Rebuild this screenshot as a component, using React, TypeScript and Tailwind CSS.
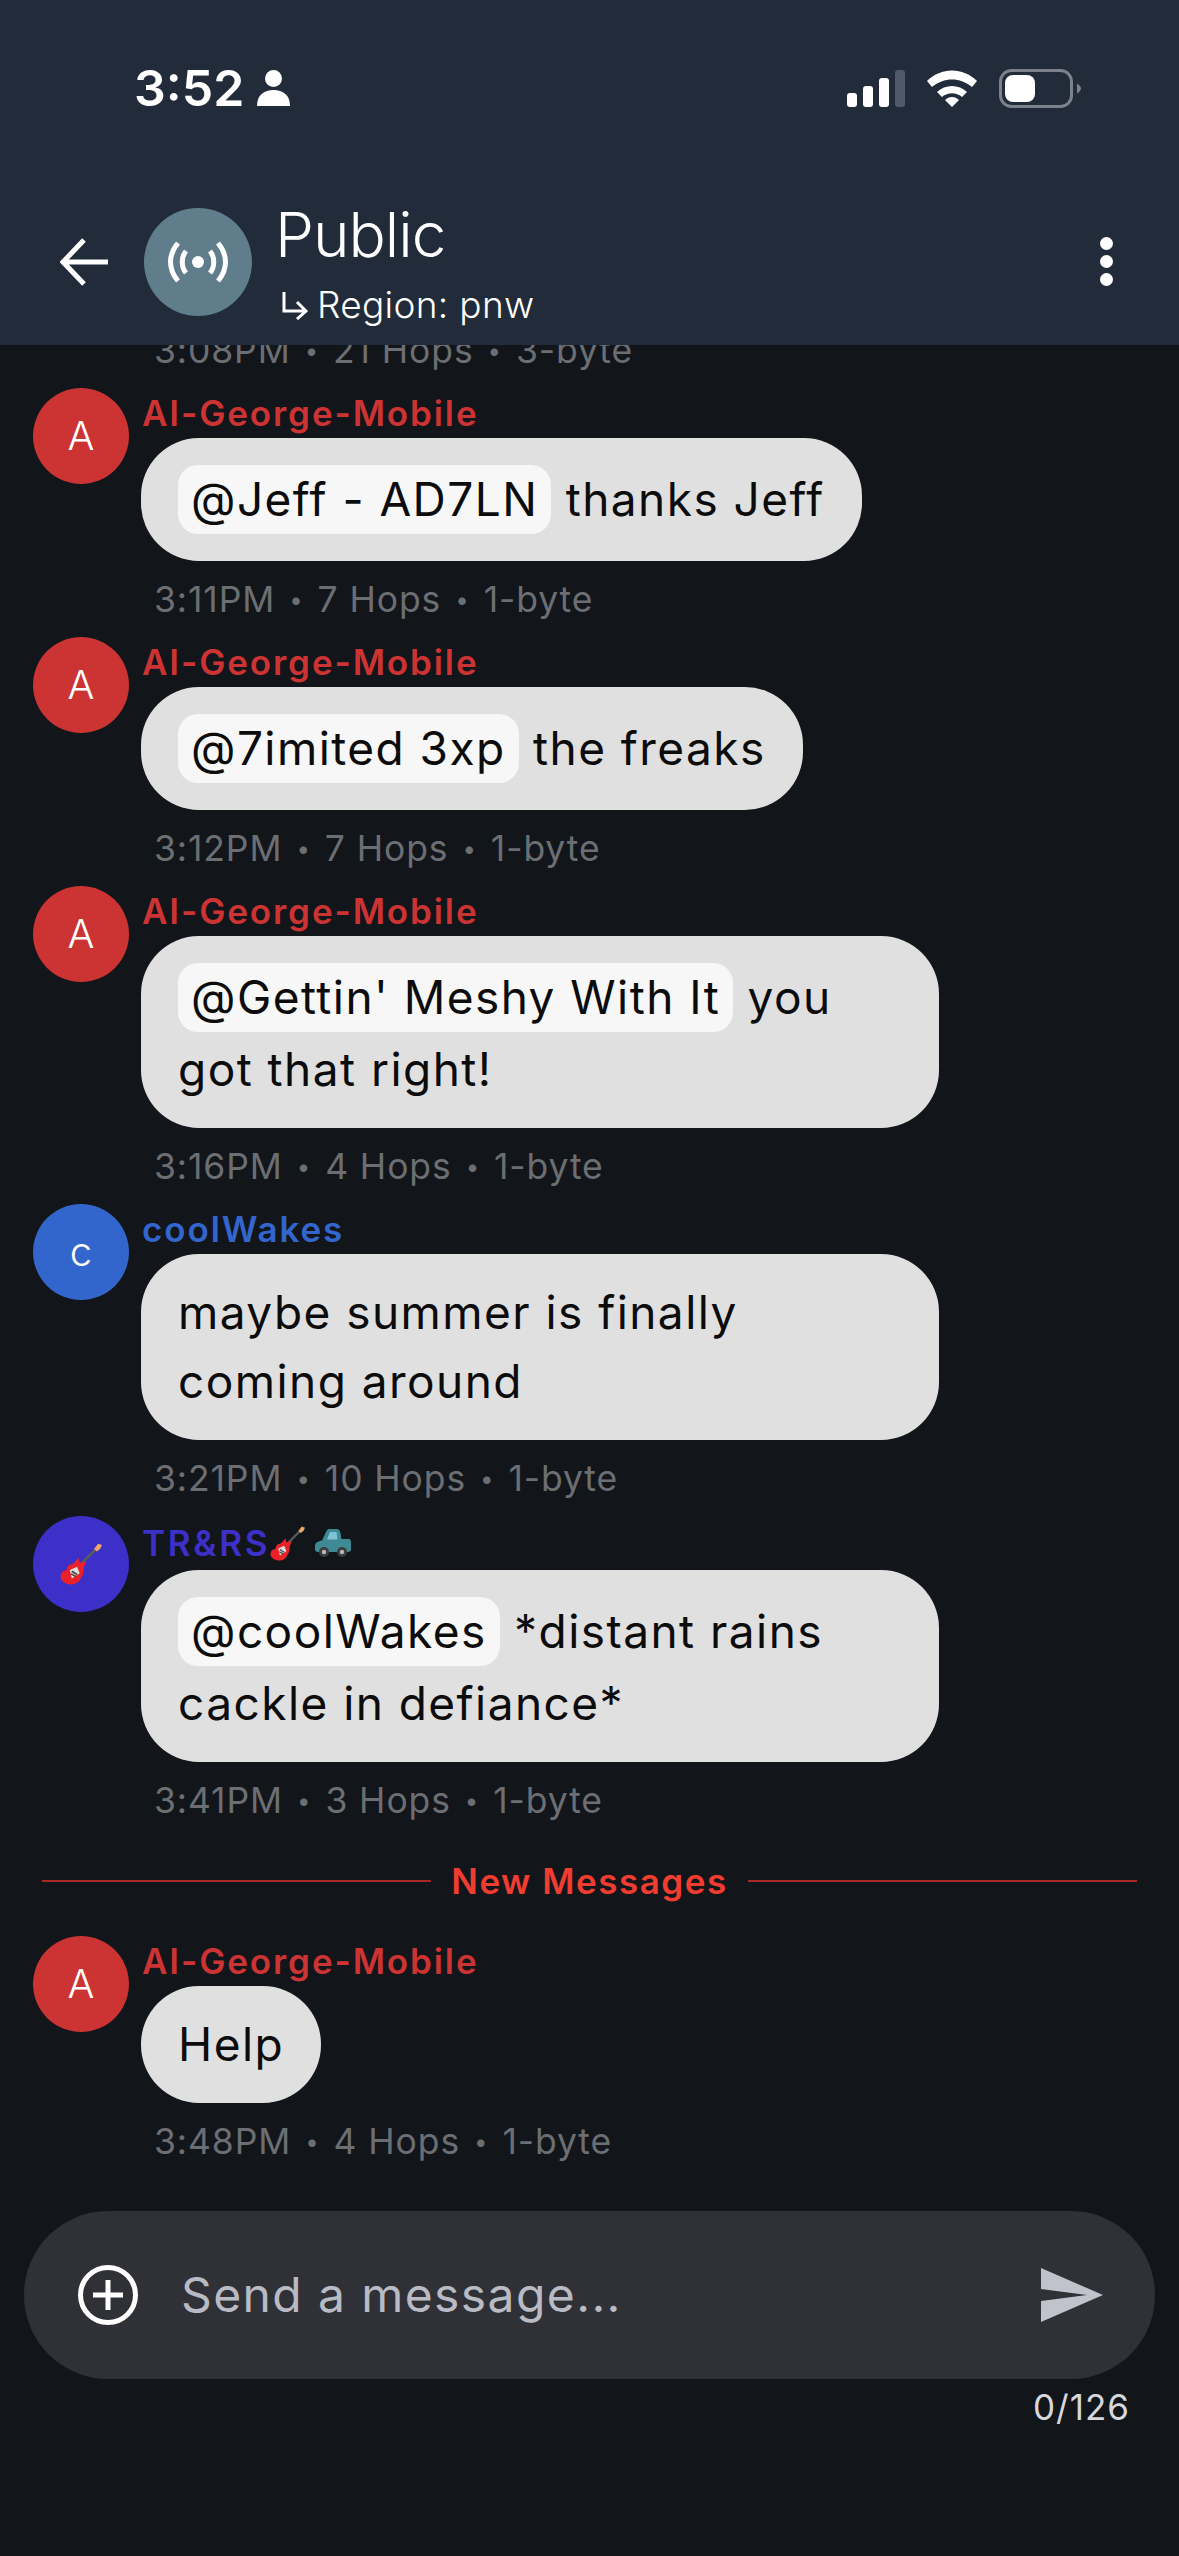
const FONT = "font-['Inter','Noto_Sans',sans-serif]"

const Guitar = ({ size }: { size: number }) => (
  <svg width={size} height={size} viewBox="0 0 32 32" className="shrink-0">
    <path d="M11 21 L28 4" stroke="#5a5a5a" strokeWidth="2" />
    <path d="M26 4.500 L29 0.500 L32 1.500 L30.500 4.500 L28 6.500 Z" fill="#f0a868" />
    <path d="M14 11 L15 15 L20 14 L18 19 C18 22 18 24 16 26 C15 30 11 32 7 31.500 C3 31 0 28 0.500 25 C1 22 3 21 5 21 C5 18 7 16 9 16.500 C11 15 13 13 14 11 Z" fill="#ea2129" />
    <path d="M7.500 20.500 L13 18 L15 23 L9 27 Z" fill="#dedede" />
    <path d="M9 21.500 L13 24 M8.500 23.500 L12 25.500" stroke="#444" strokeWidth="1.200" />
  </svg>
)

const Truck = () => (
  <svg width="36" height="28" viewBox="0 0 36 28" className="shrink-0">
    <path d="M14 0 H22 C24 0 25 2 25.500 4 L26.500 10 H34 C35.500 10 36 12 36 14 V20 C36 22 35 23 33 23 H3 C1 23 0 22 0 20 V17 C0 14 3 12 7 11.500 L11 3 C12 1 13 0 14 0 Z" fill="#3f8a94" />
    <path d="M15 3 H21.500 L22.500 10.500 H12 Z" fill="#7fc4d4" />
    <circle cx="9" cy="23" r="5" fill="#3c3c3c" />
    <circle cx="9" cy="23" r="2.200" fill="#b8b8b8" />
    <circle cx="27" cy="23" r="5" fill="#3c3c3c" />
    <circle cx="27" cy="23" r="2.200" fill="#b8b8b8" />
  </svg>
)

const Mention = ({ children }: { children: string }) => (
  <span className="inline-block bg-[#f7f7f7] rounded-[20px] px-[13px] leading-[69px] mt-[3px] mb-[3px]">{children}</span>
)

// the separators in the reference are much smaller than Inter's bullet
const Meta = ({ text }: { text: string }) => {
  const parts = text.split(' • ')
  return (
    <>
      {parts.map((p, i) => (
        <span key={p}>
          {i > 0 && <span className="text-[24px] align-[4px] mx-[14px]">•</span>}
          {p}
        </span>
      ))}
    </>
  )
}

type Msg = {
  avatar: React.ReactNode
  avatarBg: string
  nameColor: string
  name: React.ReactNode
  body: React.ReactNode
  meta: string
  wide?: boolean
  nameH?: string
  pb?: string
}

const George = { avatar: 'A', avatarBg: 'bg-[#cc3333]', nameColor: 'text-[#cc3333]', name: 'AI-George-Mobile' }

const MESSAGES: Msg[] = [
  { ...George, body: <><Mention>@Jeff - AD7LN</Mention> thanks Jeff</>, meta: '3:11PM • 7 Hops • 1-byte' },
  { ...George, body: <><Mention>@7imited 3xp</Mention> the freaks</>, meta: '3:12PM • 7 Hops • 1-byte' },
  { ...George, body: <><Mention>@Gettin' Meshy With It</Mention> you got that right!</>, meta: '3:16PM • 4 Hops • 1-byte', wide: true },
  { avatar: 'c', avatarBg: 'bg-[#3366cc]', nameColor: 'text-[#3366cc]', name: 'coolWakes', body: 'maybe summer is finally coming around', meta: '3:21PM • 10 Hops • 1-byte', wide: true },
  {
    avatar: <Guitar size={42} />,
    avatarBg: 'bg-[#3d30c8]',
    nameColor: 'text-[#3d30c8]',
    name: <span className="flex items-center tracking-[2.700px]">TR&amp;RS<Guitar size={35} /><span className="w-[10px]" /><Truck /></span>,
    nameH: 'h-[54px]',
    body: <><Mention>@coolWakes</Mention> *distant rains cackle in defiance*</>,
    meta: '3:41PM • 3 Hops • 1-byte',
    wide: true,
  },
]

const Row = ({ m }: { m: Msg }) => (
  <div className={`flex gap-[12px] pl-[33px] ${m.pb ?? 'pb-[14px]'}`}>
    <div className={`w-[96px] h-[96px] rounded-full flex items-center justify-center text-white text-[40px] font-light shrink-0 ${m.avatarBg}`}>
      {m.avatar}
    </div>
    <div className="flex flex-col min-w-0">
      <div className={`${m.nameH ?? 'h-[50px]'} pl-[1px] flex items-center text-[35px] leading-[50px] font-semibold tracking-[1.900px] ${m.nameColor}`}>{m.name}</div>
      <div className={`self-start bg-[#e0e0e0] rounded-[58px] px-[37px] py-[24px] text-[46px] leading-[69px] tracking-[1.450px] text-[#0c0c0c] ${m.wide ? 'w-[798px]' : ''}`}>
        {m.body}
      </div>
      <div className="mt-[16px] pl-[13px] text-[35.500px] leading-[46px] tracking-[0.9px] text-[#6b6e72] whitespace-nowrap"><Meta text={m.meta} /></div>
    </div>
  </div>
)

export default function App() {
  return (
    <div className={`w-[1179px] h-[2556px] bg-[#12151a] flex flex-col overflow-hidden ${FONT}`}>
      {/* Header */}
      <header className="h-[345px] bg-[#212b3a] shrink-0 flex flex-col z-10">
        <div className="h-[178px] flex items-start justify-between pt-[58px] pl-[134px] pr-[98px]">
          <div className="flex items-center gap-[13px] text-white h-[60px]">
            <span className="text-[50px] leading-[60px] font-semibold">3:52</span>
            <svg width="33" height="36" viewBox="0 0 33 36" fill="#fff">
              <circle cx="16.500" cy="8.500" r="8.500" />
              <path d="M0 36 C0 25 7 20 16.500 20 C26 20 33 25 33 36 Z" />
            </svg>
          </div>
          <div className="flex items-center gap-[22px] h-[60px]">
            <svg width="58" height="37" viewBox="0 0 58 37">
              <rect x="0" y="23" width="10" height="14" rx="3" fill="#fff" />
              <rect x="16" y="16" width="10" height="21" rx="3" fill="#fff" />
              <rect x="32" y="8" width="10" height="29" rx="3" fill="#fff" />
              <rect x="48" y="0" width="10" height="37" rx="3" fill="#4f5a69" />
            </svg>
            <svg width="50" height="37" viewBox="0 0 50 37" fill="#fff">
              <path d="M0 11 C14 -3 36 -3 50 11 L45 17 C33 7 17 7 5 17 Z" />
              <path d="M10 22 C18 14 32 14 40 22 L35 27 C29 22 21 22 15 27 Z" />
              <path d="M25 37 L18 30 C22 26 28 26 32 30 Z" />
            </svg>
            <svg width="82" height="39" viewBox="0 0 82 39" fill="none">
              <rect x="1.500" y="1.500" width="71" height="36" rx="11" stroke="#7b828c" strokeWidth="3" />
              <rect x="6" y="6" width="30" height="27" rx="8" fill="#fff" />
              <path d="M78 14.500 C80.500 16 82 18 82 19.500 C82 21 80.500 23 78 24.500 Z" fill="#7b828c" />
            </svg>
          </div>
        </div>
        <div className="flex items-center h-[167px] pl-[60px] pr-[66px]">
          <svg width="48" height="48" viewBox="0 0 48 48" fill="none" stroke="#fff" strokeWidth="5" className="shrink-0">
            <path d="M48 24 H3 M24 2 L3 24 L24 46" />
          </svg>
          <div className="w-[108px] h-[108px] rounded-full bg-[#607d8b] ml-[36px] flex items-center justify-center shrink-0">
            <svg width="60" height="42" viewBox="0 0 60 42" fill="none" stroke="#fff" strokeWidth="5">
              <circle cx="30" cy="21" r="6" fill="#fff" stroke="none" />
              <path d="M18 10 C13 16 13 26 18 32 M42 10 C47 16 47 26 42 32" />
              <path d="M10 2 C0 14 0 28 10 40 M50 2 C60 14 60 28 50 40" />
            </svg>
          </div>
          <div className="ml-[23px] pt-[6px] flex flex-col flex-1">
            <span className="text-[62px] leading-[72px] text-white font-light tracking-[-1px]">Public</span>
            <span className="flex items-center text-white text-[37px] leading-[50px] tracking-[0.3px] font-light mt-[9px] pl-[7px]">
              <svg width="26" height="28" viewBox="0 0 26 28" fill="none" stroke="#fff" strokeWidth="3" className="mr-[9px] mt-[2px]">
                <path d="M2 0 V19 H24 M15 10 L24 19 L15 27" />
              </svg>
              Region: pnw
            </span>
          </div>
          <div className="flex flex-col gap-[5px] shrink-0">
            <span className="w-[13px] h-[13px] rounded-full bg-white" />
            <span className="w-[13px] h-[13px] rounded-full bg-white" />
            <span className="w-[13px] h-[13px] rounded-full bg-white" />
          </div>
        </div>
      </header>

      {/* Messages */}
      <main className="flex-1 min-h-0 overflow-hidden flex flex-col justify-end">
        <div className="pl-[154px] text-[35.500px] leading-[46px] tracking-[0.9px] text-[#6b6e72] pb-[14px]"><Meta text="3:08PM • 21 Hops • 3-byte" /></div>
        {MESSAGES.map((m) => (
          <Row key={m.meta} m={m} />
        ))}
        <div className="flex items-center gap-[20px] px-[42px] mt-[18px] mb-[30px]">
          <div className="flex-1 h-[2px] bg-[#a92a25]" />
          <span className="text-[#f03d30] text-[35px] leading-[50px] font-semibold tracking-[1.500px]">New Messages</span>
          <div className="flex-1 h-[2px] bg-[#a92a25]" />
        </div>
        <Row m={{ ...George, body: 'Help', meta: '3:48PM • 4 Hops • 1-byte', pb: 'pb-[46px]' }} />
      </main>

      {/* Composer */}
      <div className="shrink-0 px-[24px]">
        <div className="h-[168px] rounded-[84px] bg-[#2f3136] flex items-center pl-[54px] pr-[52px]">
          <svg width="60" height="60" viewBox="0 0 60 60" fill="none" stroke="#fff" strokeWidth="5" className="shrink-0">
            <circle cx="30" cy="30" r="27.500" />
            <path d="M30 15 V45 M15 30 H45" />
          </svg>
          <span className="ml-[43px] flex-1 text-[48px] tracking-[1.400px] text-[#b9bbc4]">Send a message...</span>
          <svg width="62" height="54" viewBox="0 0 62 54" fill="#c0c2cc" className="shrink-0">
            <path d="M0 0 L62 27 L0 54 V33 L46 27 L0 21 Z" />
          </svg>
        </div>
        <div className="h-[177px] pt-[6px] pr-[25px] text-right text-[35px] leading-[44px] tracking-[1px] text-[#d6d8dc]">0/126</div>
      </div>
    </div>
  )
}
